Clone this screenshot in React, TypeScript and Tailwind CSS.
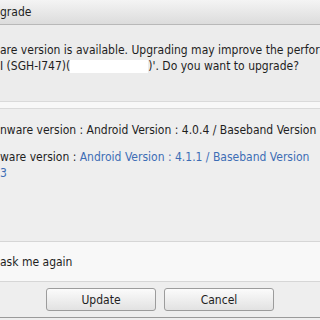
export default function App() {
  const font = { fontFamily: '"DejaVu Sans", sans-serif' };

  return (
    <div
      className="w-[320px] h-[320px] overflow-hidden bg-[#eeeeee] text-[#1e1e1e] text-[12px] leading-[16px] [font-stretch:condensed]"
      style={font}
    >
      {/* Title bar */}
      <div className="h-[25px] flex items-center bg-gradient-to-b from-[#f4f4f4] to-[#dcdcdc] border-b border-[#b8b8b8] whitespace-nowrap">
        <span className="text-[12px]">grade</span>
      </div>

      {/* Message */}
      <div className="h-[76px] pt-[17px] bg-[#ececec] whitespace-nowrap">
        <div>are version is available. Upgrading may improve the performance</div>
        <div className="flex items-center">
          <span>I (SGH-I747)(</span>
          <span className="inline-block w-[78px] h-[13px] bg-white" />
          <span>)'. Do you want to upgrade?</span>
        </div>
      </div>

      {/* Divider */}
      <div className="h-[8px] border-t border-b border-[#dadada] bg-[#f8f8f8]" />

      {/* Firmware info */}
      <div className="h-[132px] pt-[13px] whitespace-nowrap">
        <div>nware version : Android Version : 4.0.4 / Baseband Version</div>
        <div className="mt-[11px]">
          ware version : <span className="text-[#3d6db5]">Android Version : 4.1.1 / Baseband Version</span>
        </div>
        <div className="text-[#3d6db5]">3</div>
      </div>

      {/* Don't ask again */}
      <div className="h-[41px] flex items-center border-t border-b border-[#d6d6d6] bg-[#f8f8f8] whitespace-nowrap">
        <span>ask me again</span>
      </div>

      {/* Buttons */}
      <div className="h-[36px] flex items-start gap-[8px] pt-[6px] pl-[46px] border-b border-[#9a9a9a]">
        <button className="w-[110px] h-[23px] rounded-[3px] border border-[#9c9c9c] bg-gradient-to-b from-[#fbfbfb] to-[#e2e2e2] text-[#1e1e1e] text-[12px]">
          Update
        </button>
        <button className="w-[110px] h-[23px] rounded-[3px] border border-[#9c9c9c] bg-gradient-to-b from-[#fbfbfb] to-[#e2e2e2] text-[#1e1e1e] text-[12px]">
          Cancel
        </button>
      </div>
    </div>
  );
}
